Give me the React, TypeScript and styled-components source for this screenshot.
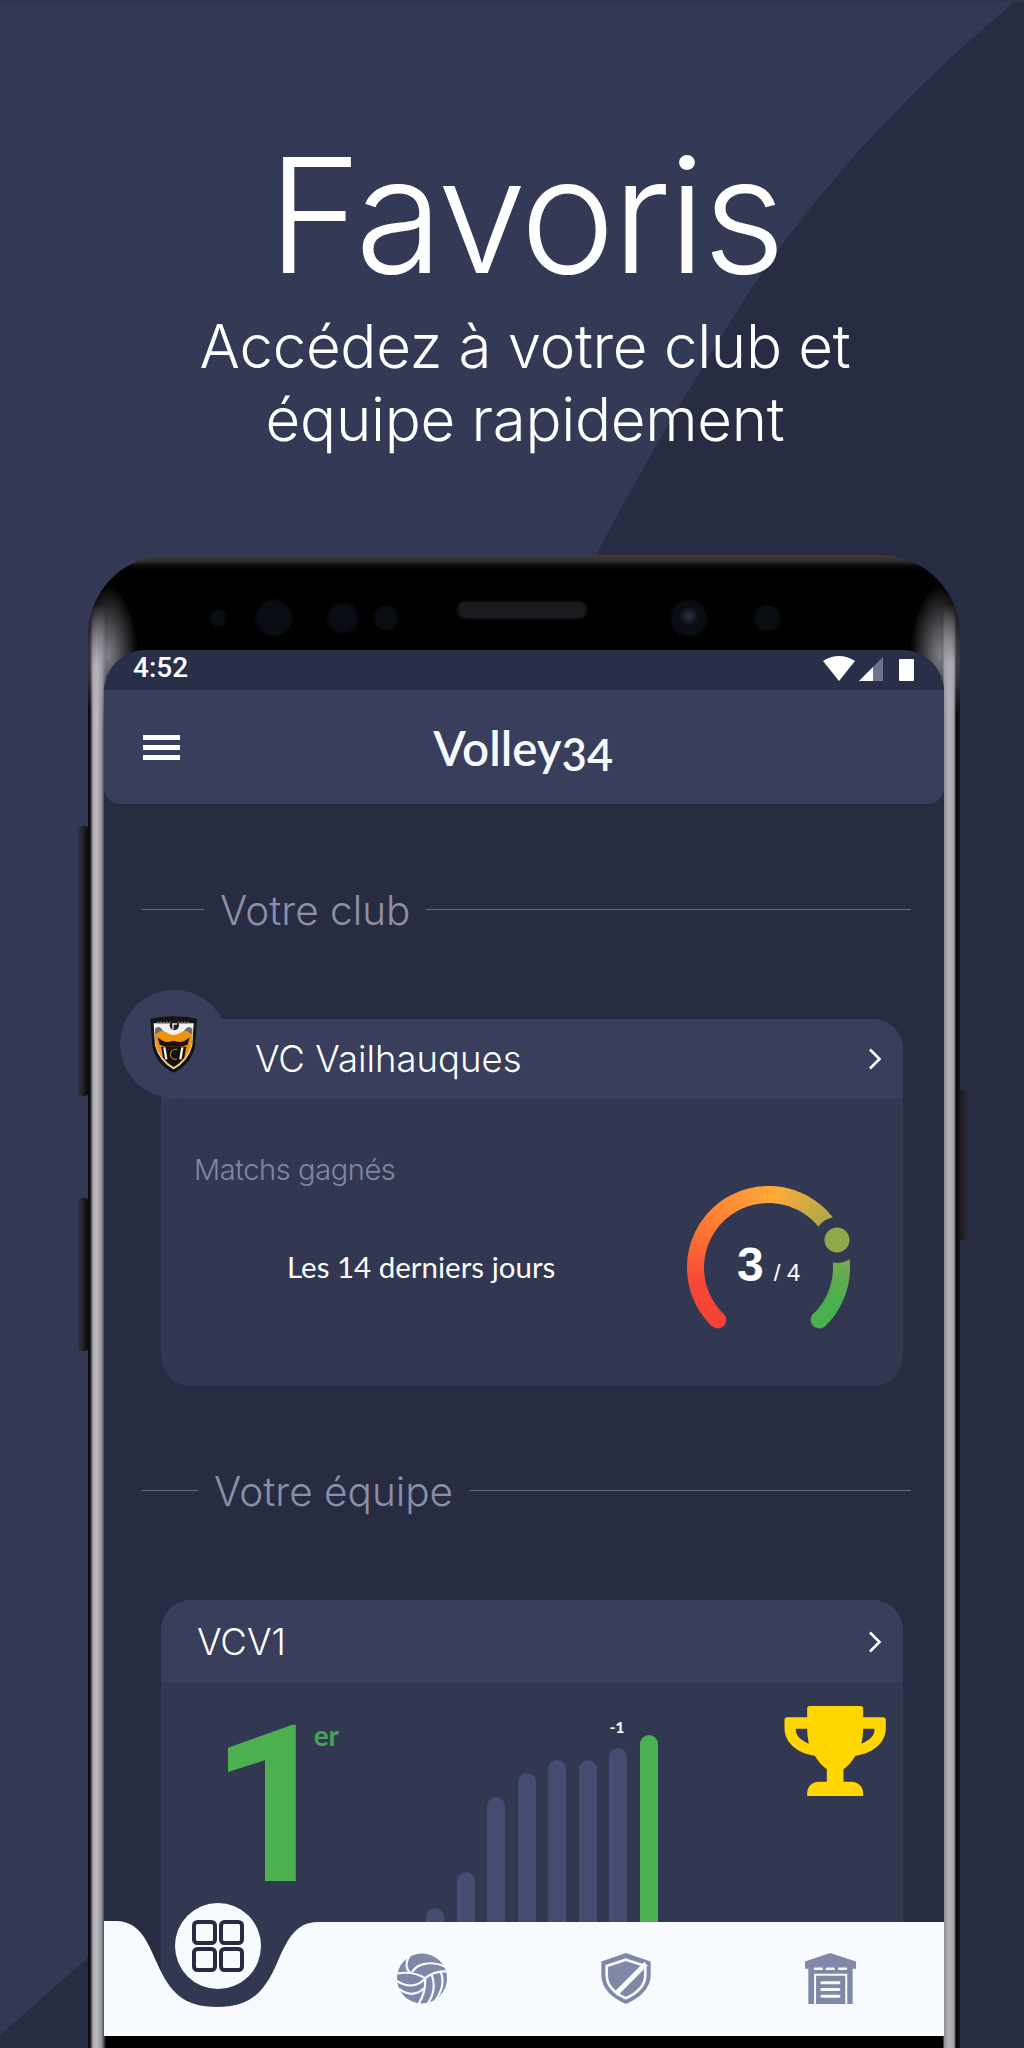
import React from "react";
import styled, { createGlobalStyle } from "styled-components";

const GlobalStyle = createGlobalStyle`
  html, body { margin: 0; padding: 0; background: #343a56; }
  * { box-sizing: border-box; }
`;

const DISPLAY_FONT = `"Inter", "Liberation Sans", sans-serif`;
const BODY_FONT = `"Lato", "Liberation Sans", sans-serif`;

const teamBars = [
  { height: 92 },
  { height: 128 },
  { height: 203 },
  { height: 227 },
  { height: 240 },
  { height: 240 },
  { height: 252, label: "-1" },
  { height: 265, active: true },
];

function polar(deg: number, r = 73) {
  const a = ((deg - 90) * Math.PI) / 180;
  return [768.5 + r * Math.cos(a), 1266.5 + r * Math.sin(a)];
}

function mix(a: number[], b: number[], t: number) {
  return `rgb(${a.map((v, i) => Math.round(v + (b[i] - v) * t)).join(",")})`;
}

const gaugeStops: [number, number[]][] = [
  [-136, [244, 67, 54]],
  [-105, [246, 72, 54]],
  [-50, [255, 130, 50]],
  [5, [255, 171, 56]],
  [45, [183, 170, 72]],
  [95, [100, 172, 78]],
  [115, [76, 175, 80]],
  [136, [76, 175, 80]],
];

function gaugeColor(deg: number) {
  for (let i = 0; i < gaugeStops.length - 1; i++) {
    const [d0, c0] = gaugeStops[i];
    const [d1, c1] = gaugeStops[i + 1];
    if (deg <= d1) return mix(c0, c1, (deg - d0) / (d1 - d0));
  }
  return "rgb(76,175,80)";
}

function Gauge() {
  const segs = [];
  for (let d = -136; d < 136; d += 3) {
    const [x1, y1] = polar(d);
    const [x2, y2] = polar(d + 3.4);
    segs.push(
      <path
        key={d}
        d={`M${x1} ${y1} A73 73 0 0 1 ${x2} ${y2}`}
        stroke={gaugeColor(d)}
        strokeWidth="17"
        fill="none"
      />
    );
  }
  const [sx, sy] = polar(-136);
  const [ex, ey] = polar(136);
  return (
    <GaugeWrap>
      <svg width="180" height="160" viewBox="680 1175 180 160">
        {segs}
        <circle cx={sx} cy={sy} r="8.5" fill="#f44336" />
        <circle cx={ex} cy={ey} r="8.5" fill="#4caf50" />
        <circle cx="837" cy="1239" r="23" fill="#323851" />
        <circle cx="837" cy="1239" r="12.5" fill="#8fa84a" />
      </svg>
      <GaugeValue>
        <strong>3</strong>
        <span>/ 4</span>
      </GaugeValue>
    </GaugeWrap>
  );
}

function Chevron() {
  return (
    <svg width="14" height="22" viewBox="0 0 14 22">
      <path d="M2 1.5 L11.5 11 L2 20.5" stroke="#fff" strokeWidth="2.6" fill="none" />
    </svg>
  );
}

function ClubLogo() {
  return (
    <svg width="48" height="58" viewBox="15 21 144 174">
      <path d="M16 32 Q85 18 156 32 L150 115 Q137 172 86 194 Q35 172 22 115 Z" fill="#141414" />
      <path d="M26 46 H146 L142 112 Q130 160 86 184 Q42 160 30 112 Z" fill="#f2f2f2" />
      <path d="M36 44 H136" stroke="#777" strokeWidth="5" strokeDasharray="6 3" />
      <path d="M30 62 Q44 48 58 74 L30 80 Z M142 62 Q128 48 114 74 L142 80 Z" fill="#6e6e6e" />
      <path d="M29 82 Q48 62 62 72 Q86 90 110 72 Q124 62 143 82 L140 112 Q128 156 86 180 Q44 156 32 112 Z" fill="#f0930f" />
      <path d="M38 88 Q56 104 70 102 L86 98 L102 102 Q116 104 134 88 L128 110 L108 116 H64 L44 110 Z" fill="#1a1208" />
      <path d="M48 116 H124 L118 148 Q104 168 86 176 Q68 168 54 148 Z" fill="#0f0f0f" />
      <path d="M58 118 L64 154 M112 118 L106 154" stroke="#f2f2f2" strokeWidth="7" fill="none" />
      <path d="M97 124 Q78 122 76 140 Q78 156 96 154" stroke="#f0930f" strokeWidth="3" fill="none" />
      <circle cx="88" cy="52" r="14" fill="#1c1c1c" />
      <path d="M82 48 H96 M84 48 V64" stroke="#f2f2f2" strokeWidth="4" fill="none" />
    </svg>
  );
}

function Trophy() {
  return (
    <svg width="102" height="90" viewBox="313 348 305 270">
      <path
        fill="#ffd600"
        fillRule="evenodd"
        d="M390 348 H542 Q550 348 550 356 V382 H610 Q618 382 618 390 V415 C618 460 575 492 527 497 C518 512 505 528 491 538 V575 H515 C535 575 550 590 550 610 V618 H382 V610 C382 590 397 575 417 575 H441 V538 C427 528 414 512 405 497 C357 492 314 460 314 415 V390 Q314 382 322 382 H382 V356 Q382 348 390 348 Z M348 416 V420 C348 438 365 452 387 461 C384 445 382 430 382 416 Z M584 416 H550 C550 430 548 445 545 461 C567 452 584 438 584 420 Z"
      />
    </svg>
  );
}

function GridIcon() {
  return (
    <svg width="52" height="52" viewBox="0 0 52 52" fill="none" stroke="#272c42" strokeWidth="4">
      <rect x="2" y="2" width="21" height="21" rx="3.5" />
      <rect x="29" y="2" width="21" height="21" rx="3.5" />
      <rect x="2" y="29" width="21" height="21" rx="3.5" />
      <rect x="29" y="29" width="21" height="21" rx="3.5" />
    </svg>
  );
}

function BallIcon() {
  return (
    <svg width="50" height="51" viewBox="22 22 148 150">
      <circle cx="96" cy="97" r="74" fill="#7f88a6" />
      <g stroke="#f7fbff" strokeWidth="6.5" fill="none">
        <path d="M105 96 C85 84 60 76 24 82" />
        <path d="M66 78 C82 54 118 42 166 62" />
        <path d="M105 96 C122 82 140 74 170 76" />
        <path d="M105 96 C108 125 100 150 84 176" />
        <path d="M124 84 C136 112 132 148 110 174" />
        <path d="M150 74 C162 100 158 130 136 162" />
        <path d="M105 98 C82 122 52 124 22 104" />
        <path d="M102 126 C78 148 52 146 28 128" />
        <path d="M60 78 C48 68 46 50 58 32" />
      </g>
    </svg>
  );
}

function ShieldIcon() {
  return (
    <svg width="50" height="51" viewBox="185 160 147 152">
      <path d="M258 160 L332 185 V225 C332 265 300 295 258 312 C216 295 185 265 185 225 V185 Z" fill="#7f88a6" />
      <path d="M258 180 L316 199 V226 C316 256 292 281 258 295 C224 281 201 256 201 226 V199 Z" fill="none" stroke="#f7fbff" strokeWidth="8" />
      <path d="M228 282 L318 192" stroke="#f7fbff" strokeWidth="15" />
    </svg>
  );
}

function WarehouseIcon() {
  return (
    <svg width="51" height="51" viewBox="795 160 152 152">
      <path d="M870 160 L947 185 V207 H937 V312 H805 V207 H795 V185 Z" fill="#7f88a6" />
      <path d="M825 207 H845 M860 207 H880 M897 207 H917" stroke="#f7fbff" strokeWidth="8" strokeLinecap="round" />
      <path d="M825 312 V225 H918 V312" fill="none" stroke="#f7fbff" strokeWidth="6" />
      <path d="M845 249 H896 M845 269 H896 M845 289 H896" stroke="#f7fbff" strokeWidth="9" strokeLinecap="round" />
    </svg>
  );
}

export default function App() {
  return (
    <Page>
      <GlobalStyle />
      <Backdrop viewBox="0 0 1024 2048" preserveAspectRatio="none">
        <path
          fill="#272c42"
          d="M1013 0 C930 70 850 150 780 245 C745 290 650 450 597 551 L200 1800 L85 1960 L0 2035 V2048 H1024 V0 Z"
        />
      </Backdrop>
      <Hero>
        <Title>Favoris</Title>
        <Subtitle>
          Accédez à votre club et
          <br />
          équipe rapidement
        </Subtitle>
      </Hero>
      <Phone>
        <SideButton $side="left" $top={271} $height={270} />
        <SideButton $side="left" $top={643} $height={153} />
        <SideButton $side="right" $top={535} $height={150} />
        <Sensors>
          <Sensor $size={16} $gap={0} />
          <Sensor $size={36} $gap={30} />
          <Sensor $size={30} $gap={36} />
          <Sensor $size={24} $gap={16} />
          <Speaker />
          <Sensor $size={36} $gap={84} $lens />
          <Sensor $size={26} $gap={47} />
        </Sensors>
        <Screen>
          <StatusBar>
            <Clock>4:52</Clock>
            <StatusIcons>
              <svg width="32" height="25" viewBox="0 0 32 25">
                <path d="M0 5 Q16 -5 32 5 L16 25 Z" fill="#fff" />
              </svg>
              <svg width="24" height="24" viewBox="0 0 24 24">
                <path d="M0 24 L24 0 V24 Z" fill="#6f748c" />
                <path d="M0 24 L14 10 V24 Z" fill="#fff" />
              </svg>
              <Battery />
            </StatusIcons>
          </StatusBar>
          <AppHeader>
            <Burger>
              <i />
              <i />
              <i />
            </Burger>
            <AppTitle>Volley34</AppTitle>
          </AppHeader>
          <Content>
            <SectionTitle>
              <Rule $width={63} />
              <span>Votre club</span>
              <Rule />
            </SectionTitle>
            <Card>
              <ClubHead>
                <span>VC Vailhauques</span>
                <Chevron />
              </ClubHead>
              <LogoBadge>
                <ClubLogo />
              </LogoBadge>
              <ClubBody>
                <CardLabel>Matchs gagnés</CardLabel>
                <PeriodRow>
                  <Period>Les 14 derniers jours</Period>
                  <Gauge />
                </PeriodRow>
              </ClubBody>
            </Card>
            <SectionTitle>
              <Rule $width={57} />
              <span>Votre équipe</span>
              <Rule />
            </SectionTitle>
            <Card>
              <TeamHead>
                <span>VCV1</span>
                <Chevron />
              </TeamHead>
              <TeamBody>
                <Rank>
                  <b>1</b>
                  <sup>er</sup>
                </Rank>
                <Bars>
                  {teamBars.map((bar, i) => (
                    <Bar key={i} $active={bar.active} style={{ height: bar.height }}>
                      {bar.label && <BarLabel>{bar.label}</BarLabel>}
                    </Bar>
                  ))}
                </Bars>
                <TrophyCell>
                  <Trophy />
                </TrophyCell>
              </TeamBody>
            </Card>
          </Content>
          <BottomNav>
            <NavShape viewBox="0 0 840 115" preserveAspectRatio="none">
              <path
                fill="#f7fbff"
                d="M0 0 H12 C36 0 44 22 53 42 C66 72 80 86 113 86 C146 86 160 72 173 42 C182 22 190 1 214 1 H840 V115 H0 Z"
              />
            </NavShape>
            <ActiveTab>
              <GridIcon />
            </ActiveTab>
            <NavItems>
              <BallIcon />
              <ShieldIcon />
              <WarehouseIcon />
            </NavItems>
          </BottomNav>
        </Screen>
      </Phone>
    </Page>
  );
}

const Page = styled.div`
  position: relative;
  width: 1024px;
  height: 2048px;
  overflow: hidden;
  background: #343a56;
  border-top: 3px solid #2e3350;
`;

const Backdrop = styled.svg`
  position: absolute;
  inset: 0;
  width: 100%;
  height: 100%;
`;

const Hero = styled.header`
  position: relative;
  height: 552px;
  padding: 117px 0 0 26px;
  color: #fff;
  text-align: center;
  font-family: ${DISPLAY_FONT};
`;

const Title = styled.h1`
  margin: 0;
  font-size: 160px;
  line-height: 190px;
  font-weight: 300;
  letter-spacing: -3px;
`;

const Subtitle = styled.p`
  margin: 0;
  font-size: 60px;
  line-height: 73px;
  font-weight: 300;
  letter-spacing: -0.3px;
`;

const Phone = styled.section`
  position: relative;
  width: 872px;
  height: 1493px;
  margin-left: 88px;
  padding-left: 16px;
  border-radius: 80px 80px 0 0;
  background:
    radial-gradient(30px 70px at 20px 100px, rgba(170, 170, 180, 0.75), rgba(170, 170, 180, 0)),
    radial-gradient(30px 70px at 852px 100px, rgba(170, 170, 180, 0.75), rgba(170, 170, 180, 0)),
    linear-gradient(
      180deg,
      #3c3c3c 0,
      #2f2f2f 6px,
      #0a0a0a 11px,
      #000 16px,
      #000 50px,
      rgba(0, 0, 0, 0) 110px
    ),
    linear-gradient(
      90deg,
      #0a0a0c 0,
      #0a0a0c 2px,
      #a8a8b0 5px,
      #bcbcc2 9px,
      #8d8d96 14px,
      #23263a 17px,
      #000 18px,
      #000 855px,
      #8d8d96 856px,
      #b4b4ba 861px,
      #a0a0a8 866px,
      #0a0a0c 868px,
      #11131d 872px
    );
`;

const SideButton = styled.div<{ $side: "left" | "right"; $top: number; $height: number }>`
  position: absolute;
  top: ${(p) => p.$top}px;
  height: ${(p) => p.$height}px;
  width: 10px;
  ${(p) => (p.$side === "left" ? "left: -10px;" : "right: -7px;")}
  background: linear-gradient(
    ${(p) => (p.$side === "left" ? "90deg" : "270deg")},
    rgba(30, 30, 32, 0.25),
    #1e1e20 60%,
    #0a0a0a
  );
  border-radius: 3px;
`;

const Sensors = styled.div`
  display: flex;
  align-items: center;
  height: 95px;
  padding: 30px 0 0 106px;
`;

const Sensor = styled.span<{ $size: number; $gap: number; $lens?: boolean }>`
  flex: none;
  width: ${(p) => p.$size}px;
  height: ${(p) => p.$size}px;
  margin-left: ${(p) => p.$gap}px;
  border-radius: 50%;
  filter: blur(1.5px);
  background: ${(p) =>
    p.$lens
      ? "radial-gradient(circle at 50% 45%, #34364a 0, #0a0c14 35%, #0c0f16 100%)"
      : "#0a0e14"};
`;

const Speaker = styled.span`
  flex: none;
  width: 130px;
  height: 18px;
  margin: -16px 0 0 59px;
  border-radius: 9px;
  background: #1a1b1e;
  filter: blur(1px);
`;

const Screen = styled.div`
  position: relative;
  width: 840px;
  height: 1386px;
  overflow: hidden;
  border-radius: 42px 42px 0 0;
  background: #272c42;
`;

const StatusBar = styled.div`
  display: flex;
  justify-content: space-between;
  align-items: center;
  height: 40px;
  padding: 0 30px 5px 29px;
  background: #2a2f49;
`;

const Clock = styled.span`
  color: #fff;
  font: 500 28px "Roboto", sans-serif;
`;

const StatusIcons = styled.div`
  display: flex;
  align-items: flex-end;
  gap: 4px;
  padding-top: 2px;
`;

const Battery = styled.span`
  width: 15px;
  height: 22px;
  margin-left: 12px;
  background: #fff;
  border-radius: 1px;
`;

const AppHeader = styled.div`
  position: relative;
  display: flex;
  align-items: center;
  justify-content: center;
  height: 114px;
  background: #383e5c;
  border-radius: 0 0 16px 16px;
`;

const Burger = styled.div`
  position: absolute;
  left: 39px;
  top: 45px;
  display: flex;
  flex-direction: column;
  gap: 5px;

  i {
    display: block;
    width: 37px;
    height: 5px;
    background: #fff;
  }
`;

const AppTitle = styled.h2`
  margin: 0 0 0 -2px;
  color: #f6f9ff;
  font: 600 47.5px ${BODY_FONT};
  font-variant-numeric: oldstyle-nums;
`;

const Content = styled.main`
  padding: 81px 33px 0 37px;
`;

const SectionTitle = styled.div`
  display: flex;
  align-items: center;
  gap: 16px;
  height: 50px;
  margin-bottom: 84px;
  color: #8b90a8;
  font: 300 40.5px ${DISPLAY_FONT};
  white-space: nowrap;
`;

const Rule = styled.span<{ $width?: number }>`
  display: block;
  height: 1px;
  margin-top: -2px;
  background: #666b84;
  ${(p) => (p.$width ? `width: ${p.$width}px; flex: none;` : "flex: 1;")}
`;

const Card = styled.article`
  position: relative;
  width: 742px;
  margin: 0 0 80px 20px;
  border-radius: 30px;
  background: #323851;
`;

const LogoBadge = styled.div`
  position: absolute;
  left: -41px;
  top: -29px;
  display: flex;
  align-items: center;
  justify-content: center;
  width: 108px;
  height: 108px;
  border-radius: 50%;
  background: #383e5c;
`;

const CardHead = styled.div`
  display: flex;
  align-items: center;
  justify-content: space-between;
  padding-right: 21px;
  background: #383e5c;
  border-radius: 30px 30px 0 0;
  color: #fff;
  font-family: ${DISPLAY_FONT};
  font-weight: 300;
  font-size: 36.5px;
`;

const ClubHead = styled(CardHead)`
  height: 80px;
  padding-left: 94px;
`;

const TeamHead = styled(CardHead)`
  height: 83px;
  padding-left: 36px;
`;

const ClubBody = styled.div`
  height: 287px;
  padding: 53px 38px 0 33px;
`;

const CardLabel = styled.div`
  color: #82879f;
  font: 300 29px/36px ${DISPLAY_FONT};
  letter-spacing: -0.4px;
`;

const PeriodRow = styled.div`
  display: flex;
  justify-content: space-between;
  align-items: flex-start;
`;

const Period = styled.div`
  margin: 61px 0 0 93px;
  color: #fff;
  font: 400 29.5px/36px ${BODY_FONT};
`;

const GaugeWrap = styled.div`
  position: relative;
  margin-top: -12px;
  margin-right: 5px;
`;

const GaugeValue = styled.div`
  position: absolute;
  left: 57px;
  top: 62px;
  display: flex;
  align-items: baseline;
  gap: 10px;
  color: #fff;
  font-family: "Liberation Sans", sans-serif;

  strong {
    font-size: 48px;
    line-height: 54px;
  }

  span {
    font-size: 24px;
  }
`;

const TeamBody = styled.div`
  display: grid;
  grid-template-columns: 265px 232px 1fr;
  align-items: start;
  height: 400px;
  padding-top: 23px;
`;

const Rank = styled.div`
  display: flex;
  align-items: flex-start;
  padding-left: 49px;
  margin-top: -9px;
  color: #4caf50;

  b {
    font: 700 219px/219px "Roboto", sans-serif;
  }

  sup {
    margin: 20px 0 0 -22px;
    font: 700 28px/36px ${BODY_FONT};
    color: #46a35a;
  }
`;

const Bars = styled.div`
  display: flex;
  align-items: flex-end;
  justify-content: space-between;
  height: 265px;
  margin-top: 29px;
`;

const Bar = styled.div<{ $active?: boolean }>`
  position: relative;
  width: 18px;
  border-radius: 9px 9px 0 0;
  background: ${(p) => (p.$active ? "#4caf50" : "#444c70")};
`;

const BarLabel = styled.span`
  position: absolute;
  left: 0;
  top: -31px;
  color: #fff;
  font: 700 16px "Lato", sans-serif;
`;

const TrophyCell = styled.div`
  padding-left: 126px;
`;

const BottomNav = styled.nav`
  position: absolute;
  left: 0;
  right: 0;
  bottom: 0;
  height: 115px;
`;

const NavShape = styled.svg`
  position: absolute;
  inset: 0;
  width: 100%;
  height: 100%;
`;

const ActiveTab = styled.div`
  position: absolute;
  left: 71px;
  top: -18px;
  display: flex;
  align-items: center;
  justify-content: center;
  width: 86px;
  height: 86px;
  border-radius: 50%;
  background: #f7fbff;
`;

const NavItems = styled.div`
  position: absolute;
  left: 293px;
  top: 32px;
  display: flex;
  align-items: center;
  gap: 154px;
`;
